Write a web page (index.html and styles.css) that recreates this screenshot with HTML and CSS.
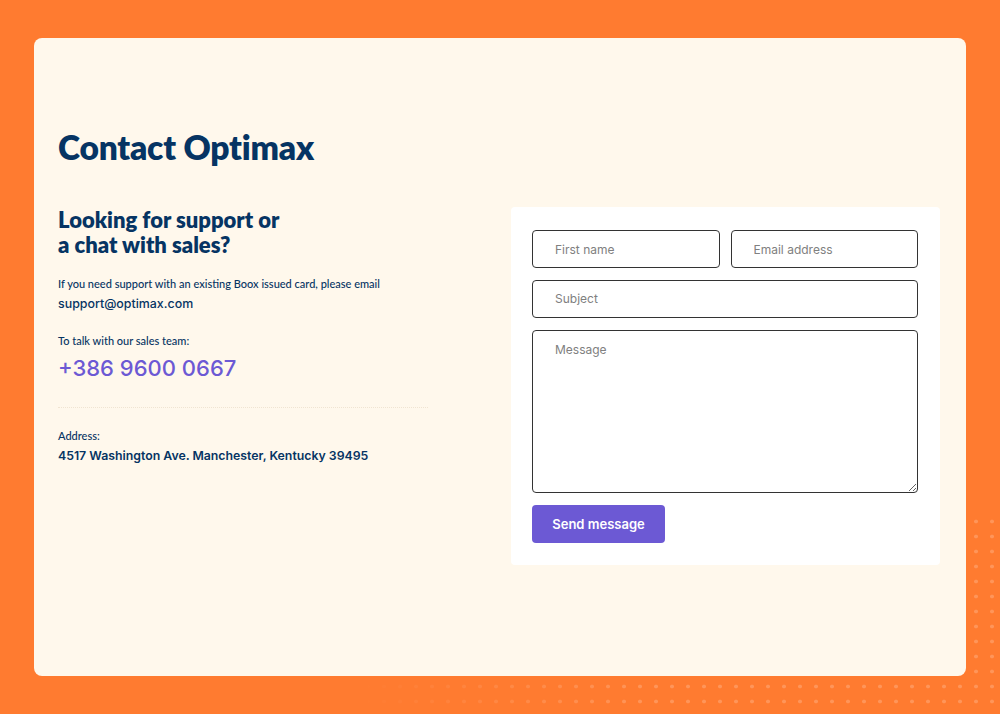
FILE: index.html
```html
<!DOCTYPE html>
<html lang="en">
<head>
<meta charset="utf-8">
<title>Contact Optimax</title>
<link rel="stylesheet" href="styles.css">
</head>
<body>
<main class="card">
  <h1 class="title">Contact Optimax</h1>
  <div class="row">
    <section class="info">
      <h2 class="subtitle">Looking for support or<br>a chat with sales?</h2>
      <p class="label label-first">If you need support with an existing Boox issued card, please email</p>
      <p class="value">support@optimax.com</p>
      <p class="label label-gap">To talk with our sales team:</p>
      <p class="phone">+386 9600 0667</p>
      <hr class="divider">
      <p class="label">Address:</p>
      <p class="value value-strong">4517 Washington Ave. Manchester, Kentucky 39495</p>
    </section>
    <form class="panel">
      <div class="pair">
        <input class="field" type="text" placeholder="First name">
        <input class="field" type="email" placeholder="Email address">
      </div>
      <input class="field" type="text" placeholder="Subject">
      <textarea class="field area" placeholder="Message"></textarea>
      <button class="send" type="button">Send message</button>
    </form>
  </div>
</main>
</body>
</html>
```
FILE: styles.css
```css
html, body {
  margin: 0;
  padding: 0;
}
body {
  position: relative;
  background: #ff7b30;
  width: 1000px;
  height: 714px;
  overflow: hidden;
  padding: 38px 34px;
  box-sizing: border-box;
}
body::before {
  content: "";
  position: absolute;
  right: 0;
  bottom: 0;
  width: 640px;
  height: 200px;
  background-image: radial-gradient(circle, rgba(255, 255, 255, 0.2) 1.6px, transparent 2.2px);
  background-size: 16px 15px;
  -webkit-mask-image: linear-gradient(to right, transparent 0%, #000 45%, #000 100%);
  mask-image: linear-gradient(to right, transparent 0%, #000 45%, #000 100%);
  z-index: 0;
}
.card {
  position: relative;
  z-index: 1;
  background: #fff8ec;
  border-radius: 8px;
  height: 638px;
  box-sizing: border-box;
  padding: 89px 26px 0 24px;
  color: #063463;
}
.title {
  margin: 0;
  font-family: Lato, "Noto Sans", sans-serif;
  font-weight: 800;
  font-size: 33.5px;
  line-height: 40px;
  letter-spacing: -0.2px;
}
.row {
  display: flex;
  justify-content: space-between;
  align-items: flex-start;
  margin-top: 40px;
}
.info {
  width: 370px;
}
.subtitle {
  margin: 0;
  font-family: Lato, "Noto Sans", sans-serif;
  font-weight: 800;
  font-size: 22px;
  line-height: 25px;
}
.label {
  margin: 0;
  font-family: Lato, "Noto Sans", sans-serif;
  font-size: 11px;
  line-height: 16px;
  font-weight: 500;
}
.label-first {
  margin-top: 19px;
}
.label-gap {
  margin-top: 20px;
}
.value {
  margin: 3px 0 0;
  font-family: Inter, "Liberation Sans", sans-serif;
  font-size: 12.4px;
  line-height: 18px;
  font-weight: 500;
}
.value-strong {
  font-size: 12.3px;
  font-weight: 600;
}
.phone {
  margin: 5px 0 0;
  font-family: Inter, "Liberation Sans", sans-serif;
  font-size: 22px;
  line-height: 28px;
  font-weight: 500;
  color: #6c59d4;
}
.divider {
  border: 0;
  border-top: 1.5px dotted #f0e4d2;
  margin: 25px 0 20px;
  height: 0;
}
.panel {
  width: 429px;
  height: 358px;
  box-sizing: border-box;
  background: #ffffff;
  border-radius: 4px;
  padding: 23px 22px 22px 21px;
  display: flex;
  flex-direction: column;
  gap: 12px;
}
.pair {
  display: flex;
  gap: 11px;
}
.pair .field {
  flex: 1;
  min-width: 0;
}
.field {
  height: 38px;
  box-sizing: border-box;
  border: 1.5px solid #333333;
  border-radius: 4px;
  padding: 0 22px;
  font-family: Inter, "Liberation Sans", sans-serif;
  font-size: 12px;
  color: #333;
  background: #fff;
  outline: none;
  margin: 0;
}
.field::placeholder {
  color: #808080;
}
.area {
  height: 164px;
  padding: 12px 22px;
  resize: vertical;
  line-height: 14px;
}
.send {
  align-self: flex-start;
  width: 133px;
  height: 38px;
  border: 0;
  border-radius: 4px;
  background: #6c59d4;
  color: #ffffff;
  font-family: Inter, "Liberation Sans", sans-serif;
  font-size: 13px;
  font-weight: 600;
  cursor: pointer;
}
```
